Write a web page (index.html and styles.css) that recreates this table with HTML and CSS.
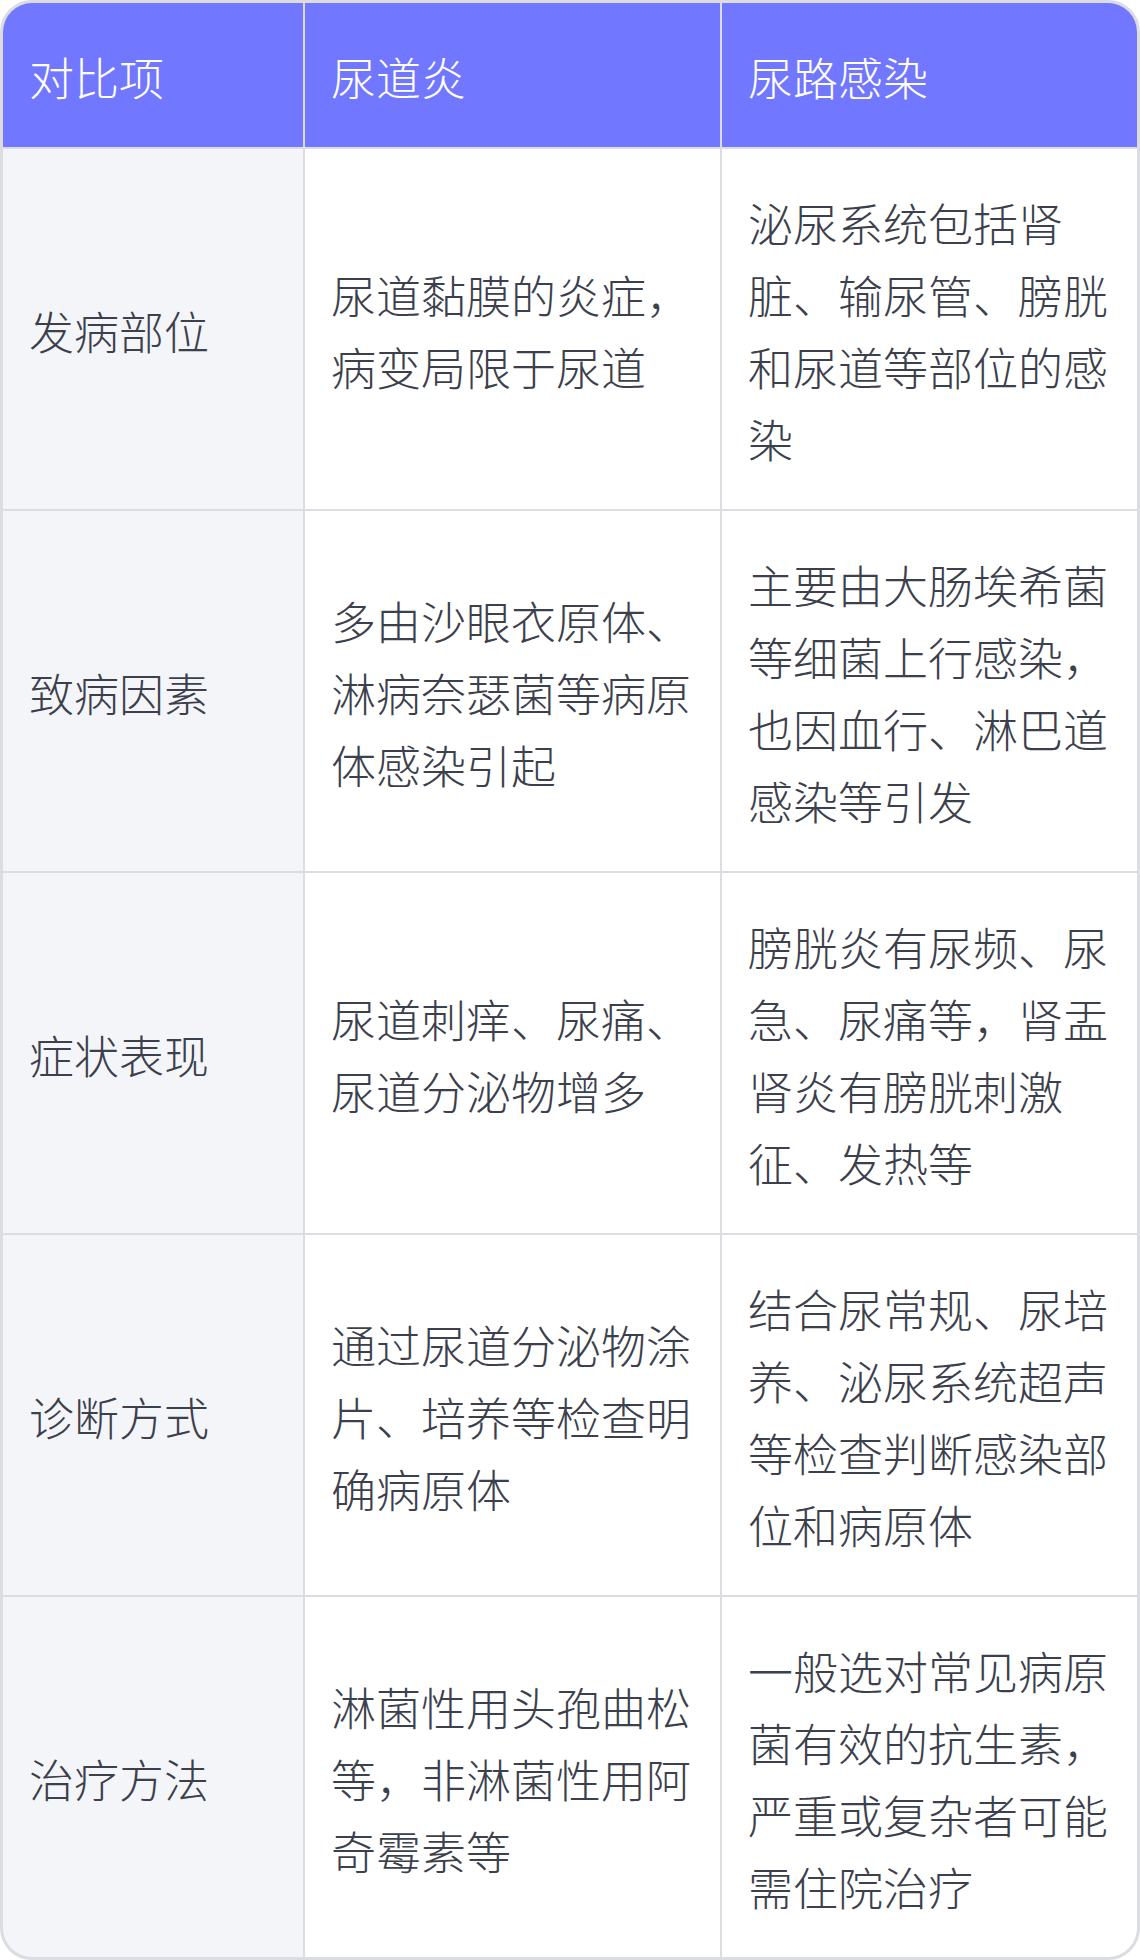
FILE: index.html
```html
<!DOCTYPE html>
<html lang="zh-CN">
<head>
<meta charset="utf-8">
<title>尿道炎与尿路感染对比</title>
<link rel="stylesheet" href="styles.css">
</head>
<body>
<div class="table">
  <div class="cell head">对比项</div>
  <div class="cell head">尿道炎</div>
  <div class="cell head">尿路感染</div>

  <div class="cell label">发病部位</div>
  <div class="cell">尿道黏膜的炎症，病变局限于尿道</div>
  <div class="cell">泌尿系统包括肾脏、输尿管、膀胱和尿道等部位的感染</div>

  <div class="cell label">致病因素</div>
  <div class="cell">多由沙眼衣原体、淋病奈瑟菌等病原体感染引起</div>
  <div class="cell">主要由大肠埃希菌等细菌上行感染，也因血行、淋巴道感染等引发</div>

  <div class="cell label">症状表现</div>
  <div class="cell">尿道刺痒、尿痛、尿道分泌物增多</div>
  <div class="cell">膀胱炎有尿频、尿急、尿痛等，肾盂肾炎有膀胱刺激征、发热等</div>

  <div class="cell label">诊断方式</div>
  <div class="cell">通过尿道分泌物涂片、培养等检查明确病原体</div>
  <div class="cell">结合尿常规、尿培养、泌尿系统超声等检查判断感染部位和病原体</div>

  <div class="cell label">治疗方法</div>
  <div class="cell">淋菌性用头孢曲松等，非淋菌性用阿奇霉素等</div>
  <div class="cell">一般选对常见病原菌有效的抗生素，严重或复杂者可能需住院治疗</div>
</div>
</body>
</html>
```

FILE: styles.css
```css
html, body {
  margin: 0;
  padding: 0;
  background: #ffffff;
}

.table {
  box-sizing: border-box;
  width: 1140px;
  display: grid;
  grid-template-columns: 300px 415px 415px;
  gap: 2px;
  border: 3px solid #dcdde2;
  border-radius: 32px;
  overflow: hidden;
  background: #dcdde2;
  font-family: "Noto Sans CJK SC", "Noto Sans", sans-serif;
  font-weight: 300;
  font-size: 45px;
  line-height: 72px;
  color: #3c3f4c;
}

.cell {
  display: flex;
  align-items: center;
  padding: 38px 28px 34px 26px;
  background: #ffffff;
  word-break: break-all;
}

.head {
  background: #7177ff;
  color: #ffffff;
}

.label {
  background: #f4f5f9;
}
```
